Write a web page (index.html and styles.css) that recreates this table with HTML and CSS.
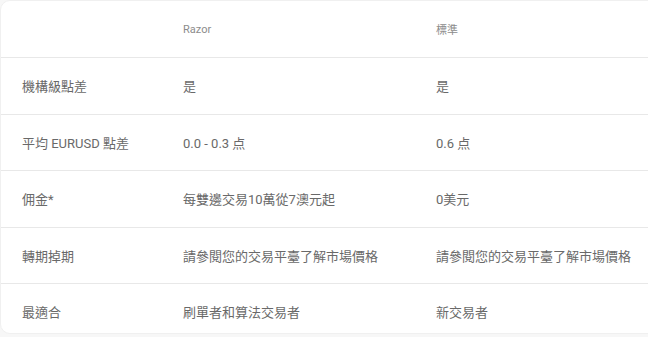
FILE: index.html
```html
<!DOCTYPE html>
<html lang="zh-Hant">
<head>
<meta charset="utf-8">
<link rel="stylesheet" href="styles.css">
</head>
<body>
<div class="card">
  <div class="row head">
    <div class="cell"></div>
    <div class="cell">Razor</div>
    <div class="cell">標準</div>
  </div>
  <div class="row">
    <div class="cell">機構級點差</div>
    <div class="cell">是</div>
    <div class="cell">是</div>
  </div>
  <div class="row">
    <div class="cell">平均 EURUSD 點差</div>
    <div class="cell">0.0 - 0.3 点</div>
    <div class="cell">0.6 点</div>
  </div>
  <div class="row">
    <div class="cell">佣金*</div>
    <div class="cell">每雙邊交易10萬從7澳元起</div>
    <div class="cell">0美元</div>
  </div>
  <div class="row">
    <div class="cell">轉期掉期</div>
    <div class="cell">請參閱您的交易平臺了解市場價格</div>
    <div class="cell">請參閱您的交易平臺了解市場價格</div>
  </div>
  <div class="row last">
    <div class="cell">最適合</div>
    <div class="cell">刷單者和算法交易者</div>
    <div class="cell">新交易者</div>
  </div>
</div>
</body>
</html>
```
FILE: styles.css
```css
html, body {
  margin: 0;
  padding: 0;
  background: #f7f7f7;
  overflow: hidden;
}
.card {
  width: 680px;
  height: 334px;
  background: #ffffff;
  border: 1px solid #f0f0f0;
  border-radius: 10px;
  box-sizing: border-box;
  font-family: Roboto, "Noto Sans CJK TC", sans-serif;
  font-size: 13px;
  color: #696969;
}
.row {
  display: grid;
  grid-template-columns: 161px 253px 1fr;
  align-items: center;
  height: 55.5px;
  border-bottom: 1px solid #e8e8e8;
  padding-left: 21px;
}
.row.head {
  height: 56px;
  font-size: 11px;
  color: #8c8c8c;
}
.row.last {
  border-bottom: none;
}
.row .cell {
  white-space: nowrap;
}
```
